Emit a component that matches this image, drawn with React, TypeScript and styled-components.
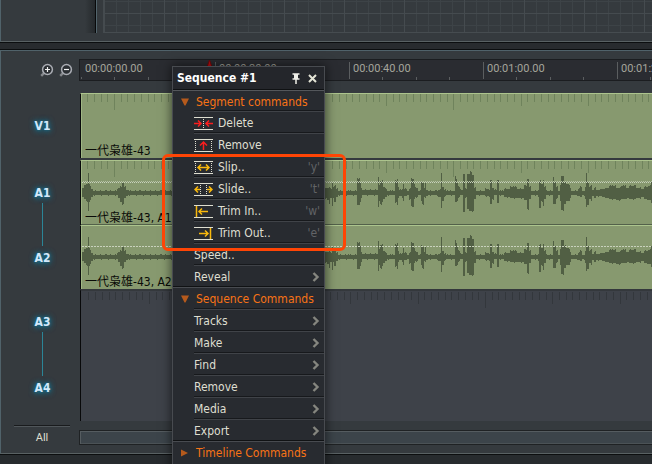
import React from "react";
import styled, { createGlobalStyle } from "styled-components";

const GlobalStyle = createGlobalStyle`
  * { box-sizing: border-box; }
  html, body { margin: 0; background: #272b2e; }
  body {
    font-family: "DejaVu Sans Condensed", "Noto Sans", "Noto Sans CJK SC", sans-serif;
    font-size: 12px;
    line-height: 16px;
    color: #dfdfd0;
  }
  button {
    font: inherit;
    color: inherit;
    background: none;
    border: 0;
    padding: 0;
    margin: 0;
    cursor: pointer;
  }
`;

const Page = styled.div`
  min-height: 100vh;
  overflow: hidden;
  display: flex;
  flex-direction: column;
`;

/* ---------- upper panel ---------- */

const UpperPanel = styled.section`
  display: flex;
  height: 42px;
  padding-bottom: 8px;
  background: #353a3e;
  border-left: 1px solid #50626a;
  border-bottom: 1px solid #596163;
`;

const SidePane = styled.div`
  flex: 0 0 95px;
  border-right: 1px solid #08090a;
  background: linear-gradient(to right, transparent 84px, #25292c 94px);
`;

const GridPane = styled.div`
  flex: 1;
  padding-left: 6px;
  border-left: 1px solid #52646c;
`;

const GridArea = styled.div`
  height: 33px;
  border-left: 1px solid #454b4f;
  border-bottom: 1px solid #464c50;
  background-image:
    linear-gradient(to right, #454b4f 1px, transparent 1px),
    linear-gradient(to bottom, #454b4f 1px, transparent 1px),
    linear-gradient(to right, #3d4347 1px, transparent 1px),
    linear-gradient(to bottom, #3d4347 1px, transparent 1px);
  background-size: 60px 60px, 60px 60px, 12px 12px, 12px 12px;
  background-position: 60px 0, 0 13px, 0 0, 0 1px;
`;

const Splitter = styled.div`
  height: 8px;
  background: #282b2e;
  border-top: 1px solid #0c0e0f;
  border-bottom: 1px solid #0c0e0f;
`;

/* ---------- timeline ---------- */

const TimelinePanel = styled.section`
  position: relative;
  display: grid;
  grid-template-columns: 78px minmax(0, 1fr);
  padding-top: 8px;
  padding-bottom: 8px;
  background: #353a3e;
  border-left: 1px solid #50626a;
  border-top: 1px solid #50626a;
  border-bottom: 1px solid #596163;
`;

const ZoomTools = styled.div`
  display: flex;
  justify-content: flex-end;
  align-items: center;
  gap: 5px;
  padding-right: 6px;
  height: 22px;
`;

const ZoomButton = styled.button`
  width: 14px;
  height: 14px;
  svg { display: block; }
`;

const Ruler = styled.div`
  height: 22px;
  overflow: hidden;
  background: #2a2c31;
  border: 1px solid #1b1d20;
  border-right: 0;
  svg { display: block; }
`;

const RulerText = styled.text`
  font-family: Roboto, sans-serif;
  font-size: 11px;
  fill: #a5a59b;
`;

const Rail = styled.div`
  display: flex;
  flex-direction: column;
  padding: 12px 0 0 5px;
`;

const VideoHead = styled.div`
  height: 67px;
  display: flex;
  justify-content: center;
  padding-top: 24px;
`;

const LinkedHeads = styled.div<{ $tall?: boolean }>`
  height: ${(p) => (p.$tall ? 130 : 129)}px;
  display: flex;
  flex-direction: column;
  align-items: center;
  gap: 3px;
  padding: 24px 0;
`;

const TrackLabel = styled.button`
  height: 16px;
  font-weight: bold;
  line-height: 18px;
  color: #d2e8fb;
  text-shadow: 0 0 3px #16718f, 0 0 6px #16718f, 0 1px 6px #16718f;
`;

const Link = styled.div`
  flex: 1;
  width: 1px;
  background: #2b8597;
`;

const Lanes = styled.div`
  min-width: 0;
  padding: 12px 0 0 1px;
`;

const Clip = styled.div<{ $last?: boolean; $gap?: boolean }>`
  position: relative;
  height: ${(p) => (p.$last ? 64 : 65)}px;
  margin-bottom: ${(p) => (p.$gap ? 2 : 0)}px;
  overflow: hidden;
  background: #87996f;
  border-top: 1px solid #acc48d;
  border-left: 1px solid #08090a;
  box-shadow: inset 1px 0 #a0b784;
  svg { display: block; }
`;

const ClipName = styled.span`
  position: absolute;
  left: 4px;
  bottom: -1px;
  color: #0a0b08;
  white-space: nowrap;
`;

const EmptyLanes = styled.div`
  height: 132px;
  overflow: hidden;
  background: #3e4249;
  border-top: 2px solid #34383c;
  border-left: 1px solid #08090a;
  svg { display: block; }
`;

const AllCell = styled.div`
  display: flex;
  justify-content: center;
  padding: 4px 9px 0 13px;
`;

const AllButton = styled.button`
  flex: 1;
  height: 20px;
  border-top: 1px solid #191b1d;
  box-shadow: inset 0 1px #50565a;
  padding-top: 4px;
  font-family: Roboto, sans-serif;
  font-size: 11px;
  line-height: 16px;
`;

const Scroller = styled.div`
  height: 15px;
  margin-top: 9px;
  border: 1px solid #1f2224;
  border-right: 0;
  background: #3c444a;
  box-shadow: inset 1px 1px #555c60, inset 0 -1px #4b5256;
`;

const Footer = styled.footer`
  flex: 1;
  min-height: 10px;
  border-top: 1px solid #0c0e0f;
  background: #272b2e;
`;

/* ---------- context menu ---------- */

const Menu = styled.div`
  position: absolute;
  left: 171px;
  top: 15px;
  width: 153px;
  padding-bottom: 8px;
  background: #282b30;
  border: 1px solid #484b50;
  box-shadow: 0 0 10px 1px rgba(0, 0, 0, 0.55);
`;

const MenuHeader = styled.div`
  display: flex;
  align-items: center;
  height: 23px;
  padding: 0 4px;
  border-bottom: 1px solid #0f1113;
  box-shadow: 0 1px #54575b;
  background: #24262b;
`;

const MenuTitle = styled.h1`
  flex: 1;
  margin: 0;
  font-size: 12px;
  line-height: 16px;
  font-weight: bold;
  color: #fff;
`;

const HeaderButton = styled.button`
  width: 16px;
  height: 16px;
  display: grid;
  place-items: center;
`;

const SectionRow = styled.button<{ $first?: boolean }>`
  display: flex;
  align-items: center;
  width: 100%;
  height: ${(p) => (p.$first ? 21 : 22)}px;
  gap: 7px;
  padding: 2px 0 0 8px;
  color: #f87316;
  text-align: left;
  box-shadow: ${(p) => (p.$first ? "none" : "inset 0 1px #484b50, 0 -1px #101214")};
`;

const Item = styled.button`
  display: flex;
  align-items: center;
  width: 130px;
  height: 22px;
  margin-left: 21px;
  padding-right: 4px;
  border-top: 1px solid #404348;
  box-shadow: 0 -1px #17191c;
  text-align: left;
`;

const ItemText = styled.span`
  flex: 1;
`;

const ItemIcon = styled.svg`
  width: 19px;
  height: 14px;
  margin-right: 5px;
`;

const KeyHint = styled.kbd`
  font: inherit;
  color: #626467;
`;

const Highlighted = styled.div`
  position: relative;
  &::after {
    content: "";
    position: absolute;
    inset: -1px -22px -8px -11px;
    border: 3px solid #ff4505;
    border-radius: 6px;
    pointer-events: none;
    z-index: 1;
  }
`;

/* ---------- drawings ---------- */

const ORIGIN = 81;
const DRAW_W = 2400;

type Sample = [x: number, up: number, down: number];

const WAVE: Sample[] = [
  [82, 5, 4], [84, 7, 6], [86, 9, 8], [88, 20, 18], [89, 9, 9], [90, 6, 7], [91, 4, 4], [93, 2, 2],
  [117, 3, 2], [118, 5, 5], [120, 6, 9], [122, 10, 11], [124, 6, 5], [126, 3, 3], [128, 2, 2],
  [325, 4, 5], [327, 5, 7], [329, 6, 11], [330, 4, 5], [332, 10, 12], [333, 6, 5], [334, 7, 9], [336, 4, 4],
  [338, 2, 2], [357, 15, 12], [358, 14, 12], [360, 10, 8], [361, 5, 5], [362, 3, 2], [378, 16, 14],
  [379, 8, 8], [380, 11, 11], [382, 13, 9], [383, 6, 6], [385, 4, 4], [387, 2, 2], [395, 12, 9],
  [397, 14, 12], [398, 6, 5], [399, 3, 3], [402, 4, 4], [403, 8, 8], [404, 4, 3], [407, 2, 2], [409, 4, 6],
  [411, 15, 13], [412, 14, 14], [414, 8, 6], [415, 5, 4], [418, 2, 2], [421, 12, 8], [422, 10, 11],
  [424, 5, 4], [425, 9, 5], [426, 3, 3], [428, 2, 2], [438, 3, 4], [441, 20, 15], [442, 6, 8],
  [444, 3, 3], [446, 2, 2], [455, 16, 9], [456, 14, 9], [457, 10, 8], [458, 6, 4], [460, 3, 2],
  [463, 19, 19], [465, 4, 4], [467, 19, 16], [469, 18, 18], [470, 21, 18], [472, 18, 18], [474, 5, 6],
  [476, 2, 2], [485, 4, 3], [489, 3, 4], [490, 12, 11], [492, 5, 6], [494, 3, 2], [497, 13, 10],
  [499, 2, 2], [504, 4, 4], [510, 6, 5], [517, 4, 5], [524, 7, 7], [527, 14, 16], [529, 6, 6],
  [531, 2, 2], [538, 3, 4], [539, 12, 15], [541, 9, 8], [543, 13, 13], [544, 6, 6], [546, 2, 2],
  [553, 16, 11], [554, 10, 11], [556, 6, 5], [558, 2, 2], [560, 7, 8], [561, 17, 17], [564, 11, 11],
  [566, 9, 8], [568, 8, 8], [570, 4, 4], [571, 2, 2], [578, 4, 3], [580, 6, 4], [582, 2, 2], [585, 5, 6],
  [586, 20, 14], [587, 11, 12], [589, 6, 6], [591, 8, 7], [592, 3, 3], [594, 5, 5], [596, 3, 3],
  [602, 4, 4], [606, 5, 5], [609, 7, 6], [616, 5, 7], [621, 7, 6], [626, 5, 5], [629, 7, 6], [636, 5, 5],
  [641, 4, 4], [644, 6, 6], [648, 7, 7], [651, 11, 10], [652, 6, 6],
];

function wavePath(mid: number) {
  let d = "";
  let i = 0;
  for (let x = WAVE[0][0]; x < 2000; x++) {
    while (i < WAVE.length - 1 && WAVE[i + 1][0] <= x) i++;
    const jitter = (x * 7) % 5 === 0 || (x * 13) % 11 === 3 ? 1 : 0;
    const up = WAVE[i][1] + jitter;
    const down = WAVE[i][2] + ((x * 5) % 7 === 1 ? 1 : 0);
    d += `M${x - ORIGIN} ${mid - up}h1V${mid + down}h-1z`;
  }
  return d;
}

function tickPath(anchor: number, from: number, to: number, long: Record<number, number>, step = 6.73) {
  let d = "";
  const first = Math.ceil((from - anchor) / step);
  const last = Math.floor((to - anchor) / step);
  for (let k = first; k <= last; k++) {
    d += `M${Math.round(anchor + k * step) - ORIGIN} 0h1v${long[k] ?? 8}h-1z`;
  }
  return d;
}

const CLIP_TICKS =
  tickPath(114, 86, 172, { 0: 16 }) + tickPath(386, 326, 2000, { 0: 12, 10: 16, 20: 12, 30: 12, 40: 12 });
const EMPTY_TICKS =
  tickPath(149, 86, 172, { 0: 12 }) + tickPath(485, 326, 2000, { [-20]: 12, [-10]: 12, 0: 16, 10: 12, 20: 12 });

function ClipDrawing({ ticks, wave, dither }: { ticks?: boolean; wave?: boolean; dither?: boolean }) {
  return (
    <svg width={DRAW_W} height="64" shapeRendering="crispEdges" aria-hidden="true">
      {ticks && <path d={CLIP_TICKS} fill="#6f835c" />}
      {wave && <path d={wavePath(dither ? 32 : 31)} fill="#515f44" />}
      {wave && (
        <path
          d={`M1 ${dither ? 21.5 : 20.5}H${DRAW_W}`}
          stroke="#c9d2bd"
          strokeDasharray={dither ? "1 1" : "2 1"}
        />
      )}
      {dither && <path d={`M2 20.5H${DRAW_W}`} stroke="#b4c0a4" strokeDasharray="1 1" />}
      {wave && ticks && <path d={`M0 63.5H${DRAW_W}`} stroke="#53614a" />}
    </svg>
  );
}

function ZoomGlyph({ plus }: { plus?: boolean }) {
  return (
    <svg width="14" height="14" viewBox="0 0 14 14" fill="none" aria-hidden="true">
      <path d="M4.2 9.8 1.2 12.8" stroke="#85888c" strokeWidth="2.4" />
      <circle cx="7.5" cy="6.5" r="4.9" fill="#2b2f33" stroke="#a9acb3" strokeWidth="1.5" />
      <path d={plus ? "M5 6.5h5M7.5 4v5" : "M5 6.5h5"} stroke="#f2f2f2" strokeWidth="1.2" />
    </svg>
  );
}

const Y = "#f9b90c";
const R = "#fa1e1e";
const ICONS: Record<string, React.ReactNode> = {
  delete: (
    <>
      <path d="M9.5 3v9" stroke="#deded0" strokeDasharray="1 1" />
      <path d="M0 7.5h7M4 4.5l3 3-3 3M19 7.5h-7M15 4.5l-3 3 3 3" stroke={R} strokeWidth="1.5" />
    </>
  ),
  remove: (
    <>
      <path d="M1.5 3v9M17.5 3v9" stroke="#deded0" strokeDasharray="1 1" />
      <path d="M9.5 12V4M6 7.5l3.5-3.5 3.5 3.5" stroke={R} strokeWidth="1.5" />
    </>
  ),
  slip: (
    <>
      <path d="M1.5 3v9M17.5 3v9" stroke="#deded0" strokeDasharray="1 1" />
      <path d="M4 7.5h11M7 4.5l-3 3 3 3M12 4.5l3 3-3 3" stroke={Y} strokeWidth="1.5" />
    </>
  ),
  slide: (
    <>
      <path d="M6.5 3v9M12.5 3v9" stroke="#deded0" strokeDasharray="1 1" />
      <path d="M1 7.5h5M4 4.5l-3 3 3 3M18 7.5h-5M15 4.5l3 3-3 3" stroke={Y} strokeWidth="1.5" />
    </>
  ),
  trimIn: <path d="M2.5 2v11M5 7.5h9M8 4.5l-3 3 3 3" stroke={Y} strokeWidth="1.5" />,
  trimOut: <path d="M16.5 2v11M5 7.5h9M11 4.5l3 3-3 3" stroke={Y} strokeWidth="1.5" />,
};

function CommandIcon({ name }: { name: string }) {
  return (
    <ItemIcon viewBox="0 0 19 14" fill="none" aria-hidden="true">
      <path d="M0 1.5h19M0 13.5h19" stroke="#deded0" />
      {ICONS[name]}
    </ItemIcon>
  );
}

const Chevron = () => (
  <svg width="8" height="10" viewBox="0 0 8 10" fill="none" aria-hidden="true">
    <path d="M1.5 1 5.5 5l-4 4" stroke="#85867f" strokeWidth="2.4" />
  </svg>
);

const Disclosure = ({ open }: { open?: boolean }) => (
  <svg width="8" height="8" viewBox="0 0 8 8" aria-hidden="true">
    <path d={open ? "M0 0.5h8L4.5 7.5h-1z" : "M0 0.5 7 4 0 7.5z"} fill="#b55a1c" />
  </svg>
);

interface Command {
  label: string;
  icon?: string;
  hint?: string;
  submenu?: boolean;
}

function MenuItem({ label, icon, hint, submenu }: Command) {
  return (
    <Item type="button" role="menuitem" aria-haspopup={submenu ? "menu" : undefined}>
      {icon && <CommandIcon name={icon} />}
      <ItemText>{label}</ItemText>
      {hint && <KeyHint>{`'${hint}'`}</KeyHint>}
      {submenu && <Chevron />}
    </Item>
  );
}

const EDITS: Command[] = [
  { label: "Delete", icon: "delete" },
  { label: "Remove", icon: "remove" },
];
const TRIMS: Command[] = [
  { label: "Slip..", icon: "slip", hint: "y" },
  { label: "Slide..", icon: "slide", hint: "t" },
  { label: "Trim In..", icon: "trimIn", hint: "w" },
  { label: "Trim Out..", icon: "trimOut", hint: "e" },
];
const EXTRAS: Command[] = [{ label: "Speed.." }, { label: "Reveal", submenu: true }];
const SEQUENCE = ["Tracks", "Make", "Find", "Remove", "Media", "Export"];

const TIMES = ["00:00:00.00", "00:00:20.00", "00:00:40.00", "00:01:00.00", "00:01:20.00"];

function RulerDrawing() {
  return (
    <svg width={DRAW_W} height="20" aria-label="Time ruler">
      {TIMES.map((t, i) => {
        const x = 1 + i * 134;
        return (
          <g key={t}>
            <path
              d={`M${x}.5 ${i ? 2 : 17}V19M${x + 33}.5 17V20M${x + 67}.5 17V20M${x + 100}.5 17V20`}
              stroke="#5b5e60"
            />
            <RulerText x={x + 4} y="12">{t}</RulerText>
          </g>
        );
      })}
      <path d="M129.5 0 132 7h-5z" fill="#c30f12" stroke="#6d0a0c" />
    </svg>
  );
}

export default function App() {
  return (
    <Page>
      <GlobalStyle />
      <UpperPanel>
        <SidePane />
        <GridPane>
          <GridArea />
        </GridPane>
      </UpperPanel>
      <Splitter />
      <TimelinePanel>
        <ZoomTools>
          <ZoomButton type="button" aria-label="Zoom in"><ZoomGlyph plus /></ZoomButton>
          <ZoomButton type="button" aria-label="Zoom out"><ZoomGlyph /></ZoomButton>
        </ZoomTools>
        <Ruler><RulerDrawing /></Ruler>

        <Rail>
          <VideoHead><TrackLabel type="button">V1</TrackLabel></VideoHead>
          <LinkedHeads>
            <TrackLabel type="button">A1</TrackLabel>
            <Link />
            <TrackLabel type="button">A2</TrackLabel>
          </LinkedHeads>
          <LinkedHeads $tall>
            <TrackLabel type="button">A3</TrackLabel>
            <Link />
            <TrackLabel type="button">A4</TrackLabel>
          </LinkedHeads>
        </Rail>
        <Lanes>
          <Clip $gap>
            <ClipDrawing ticks />
            <ClipName>一代枭雄-43</ClipName>
          </Clip>
          <Clip>
            <ClipDrawing ticks wave dither />
            <ClipName>一代枭雄-43, A1</ClipName>
          </Clip>
          <Clip $last>
            <ClipDrawing wave />
            <ClipName>一代枭雄-43, A2</ClipName>
          </Clip>
          <EmptyLanes>
            <svg width={DRAW_W} height="20" shapeRendering="crispEdges" aria-hidden="true">
              <path d={EMPTY_TICKS} fill="#33373c" transform="translate(0 1)" />
            </svg>
          </EmptyLanes>
        </Lanes>

        <AllCell><AllButton type="button">All</AllButton></AllCell>
        <Scroller />

        <Menu role="menu" aria-label="Sequence #1">
          <MenuHeader>
            <MenuTitle>Sequence #1</MenuTitle>
            <HeaderButton type="button" aria-label="Pin">
              <svg width="8" height="11" viewBox="0 0 8 11" fill="none" aria-hidden="true">
                <path d="M0.5 1h7M0.5 6h7" stroke="#f0f0ea" strokeWidth="1.5" />
                <path d="M2 1h4v5H2z" fill="#f0f0ea" />
                <path d="M4 6v5" stroke="#f0f0ea" strokeWidth="1.5" />
              </svg>
            </HeaderButton>
            <HeaderButton type="button" aria-label="Close">
              <svg width="9" height="9" viewBox="0 0 9 9" aria-hidden="true">
                <path d="M1 1l7 7M8 1 1 8" stroke="#e4e4d6" strokeWidth="2" />
              </svg>
            </HeaderButton>
          </MenuHeader>
          <SectionRow type="button" $first aria-expanded="true"><Disclosure open />Segment commands</SectionRow>
          {EDITS.map((c) => <MenuItem key={c.label} {...c} />)}
          <Highlighted>
            {TRIMS.map((c) => <MenuItem key={c.label} {...c} />)}
          </Highlighted>
          {EXTRAS.map((c) => <MenuItem key={c.label} {...c} />)}
          <SectionRow type="button" aria-expanded="true"><Disclosure open />Sequence Commands</SectionRow>
          {SEQUENCE.map((label) => <MenuItem key={label} label={label} submenu />)}
          <SectionRow type="button" aria-expanded="false"><Disclosure />Timeline Commands</SectionRow>
        </Menu>
      </TimelinePanel>
      <Footer />
    </Page>
  );
}
